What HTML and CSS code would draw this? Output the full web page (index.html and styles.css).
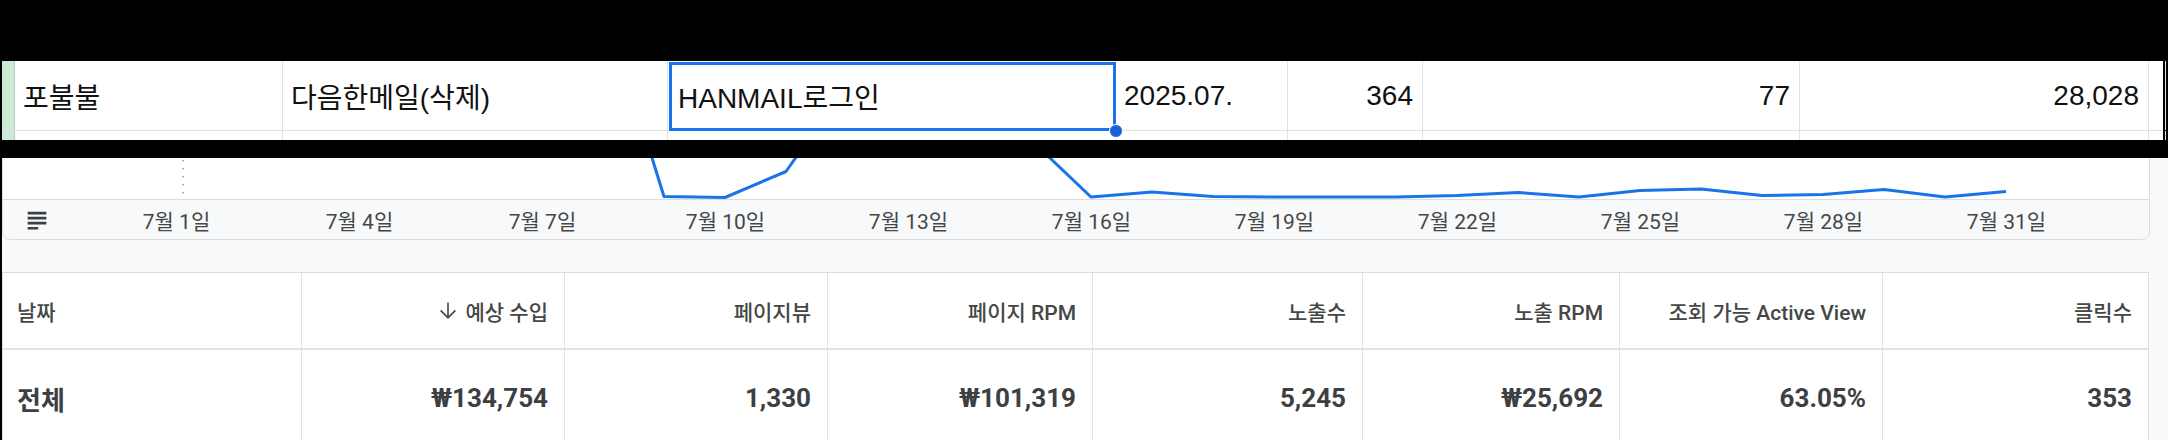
FILE: index.html
```html
<!DOCTYPE html>
<html lang="ko">
<head>
<meta charset="utf-8">
<link rel="stylesheet" href="styles.css">
</head>
<body>
<div class="band-top"></div>
<div class="sheet">
  <div class="sheet-row main">
    <div class="cell rowhead"></div>
    <div class="cell">포불불</div>
    <div class="cell">다음한메일(삭제)</div>
    <div class="cell selected">HANMAIL로그인<span class="handle"></span></div>
    <div class="cell">2025.07.</div>
    <div class="cell num">364</div>
    <div class="cell num">77</div>
    <div class="cell num">28,028</div>
    <div class="cell"></div>
  </div>
  <div class="sheet-row next">
    <div class="cell rowhead"></div>
    <div class="cell"></div>
    <div class="cell"></div>
    <div class="cell"></div>
    <div class="cell"></div>
    <div class="cell"></div>
    <div class="cell"></div>
    <div class="cell"></div>
    <div class="cell"></div>
  </div>
</div>
<div class="band-gap"></div>
<div class="dash">
  <div class="chart-card">
    <svg class="plot" viewBox="3 158 2146 41" preserveAspectRatio="none">
      <line x1="183" y1="160" x2="183" y2="198" class="marker"/>
      <polyline class="series" points="603,0 664,196.5 725,197.5 786,171.5 847,85 908,60 969,50 1030,139 1091,197 1152,192 1213,196.5 1274,197 1335,197 1396,197 1457,195.5 1518,192.5 1579,197 1640,190.5 1701,189 1762,195.5 1823,194.5 1884,189.5 1945,197 2006,191.5"/>
    </svg>
    <div class="axis">
      <div class="axis-icon">
        <svg viewBox="0 0 24 24" width="28" height="28"><path d="M4 5h16v2.3H4zM4 9.3h16v2.3H4zM4 13.6h16v2.3H4zM4 17.9h9v2.3H4z"/></svg>
      </div>
      <span class="tick">7월 1일</span>
      <span class="tick">7월 4일</span>
      <span class="tick">7월 7일</span>
      <span class="tick">7월 10일</span>
      <span class="tick">7월 13일</span>
      <span class="tick">7월 16일</span>
      <span class="tick">7월 19일</span>
      <span class="tick">7월 22일</span>
      <span class="tick">7월 25일</span>
      <span class="tick">7월 28일</span>
      <span class="tick">7월 31일</span>
    </div>
  </div>
  <div class="table-card">
    <div class="trow thead">
      <div class="tc first">날짜</div>
      <div class="tc"><svg class="sort" viewBox="0 0 24 24" width="24" height="24"><path d="M20 12l-1.2-1.2-6 6V3.5h-1.6v13.3l-6-6L4 12l8 8z"/></svg>예상 수입</div>
      <div class="tc">페이지뷰</div>
      <div class="tc">페이지 RPM</div>
      <div class="tc">노출수</div>
      <div class="tc">노출 RPM</div>
      <div class="tc">조회 가능 Active View</div>
      <div class="tc">클릭수</div>
    </div>
    <div class="trow tbody">
      <div class="tc first">전체</div>
      <div class="tc">₩134,754</div>
      <div class="tc">1,330</div>
      <div class="tc">₩101,319</div>
      <div class="tc">5,245</div>
      <div class="tc">₩25,692</div>
      <div class="tc">63.05%</div>
      <div class="tc">353</div>
    </div>
  </div>
</div>
</body>
</html>
```
FILE: styles.css
```css
* { box-sizing: border-box; }
html, body { margin: 0; padding: 0; }
body {
  background: #000;
  width: 2168px;
  height: 440px;
  overflow: hidden;
}

.band-top { height: 61px; }
.band-gap { height: 18px; }

/* ---------- spreadsheet strip ---------- */
.sheet {
  margin-left: 2px;
  width: 2161px;
  background: #fff;
  font-family: "Liberation Sans", "Noto Sans CJK KR", sans-serif;
  font-size: 28px;
  color: #111;
}
.sheet-row {
  display: grid;
  grid-template-columns: 13px 268px 385px 448px 172px 135px 377px 349px 14px;
}
.sheet-row.main { height: 70px; border-bottom: 1px solid #e1e1e1; }
.sheet-row.next { height: 9px; }
.cell {
  border-right: 1px solid #e1e1e1;
  display: flex;
  align-items: center;
  padding: 0 8px;
  white-space: nowrap;
  position: relative;
}
.cell.num { justify-content: flex-end; padding-right: 9px; }
.cell.rowhead { background: #cdebd4; border-right: 1px solid #b9c9bd; padding: 0; }
.sheet-row.main .cell:nth-child(4) { padding-left: 10px; }
.cell.selected::after {
  content: "";
  position: absolute;
  top: 1px;
  left: 1px;
  right: -1px;
  bottom: -1px;
  border: 3px solid #1a73e8;
  pointer-events: none;
}
.handle {
  position: absolute;
  right: -8px;
  bottom: -8px;
  width: 14px;
  height: 14px;
  border-radius: 50%;
  background: #1a62d8;
  border: 1px solid #fff;
  z-index: 2;
}

/* ---------- dashboard ---------- */
.dash {
  margin-left: 2px;
  width: 2166px;
  height: 282px;
  background: #f8f9fa;
  font-family: Roboto, "Noto Sans CJK KR", sans-serif;
  color: #3c4043;
}
.chart-card {
  width: 2148px;
  background: #fff;
  border: 1px solid #dadce0;
  border-top: 0;
  border-radius: 0 0 8px 8px;
  overflow: hidden;
}
.plot {
  display: block;
  width: 2146px;
  height: 41px;
}
.plot .series {
  fill: none;
  stroke: #1a73e8;
  stroke-width: 3;
  stroke-linejoin: round;
}
.plot .marker {
  stroke: #9aa0a6;
  stroke-width: 1.6;
  stroke-dasharray: 1.6 6.4;
}
.axis {
  display: grid;
  grid-template-columns: 82px repeat(11, 183px);
  align-items: center;
  height: 40px;
  border-top: 1px solid #dadce0;
  background: #f8f9fa;
}
.axis-icon {
  display: flex;
  align-items: center;
  padding-left: 20px;
}
.axis-icon svg { fill: #3c4043; }
.tick {
  text-align: center;
  font-size: 21px;
  color: #444746;
  white-space: nowrap;
}

.table-card {
  margin-top: 32px;
  width: 2147px;
  background: #fff;
  border: 1px solid #dadce0;
  border-bottom: 0;
}
.trow {
  display: grid;
  grid-template-columns: 299px 263px 263px 265px 270px 257px 263px 265px;
}
.thead {
  height: 77px;
  border-bottom: 2px solid #e3e3e3;
  font-size: 21px;
  font-weight: 500;
  color: #444746;
}
.tbody {
  height: 96px;
  font-size: 26px;
  font-weight: 700;
  color: #3c4043;
}
.tc {
  display: flex;
  align-items: center;
  justify-content: flex-end;
  padding: 0 16px;
  border-right: 1px solid #e3e3e3;
  white-space: nowrap;
}
.tc:last-child { border-right: 0; }
.tc.first { justify-content: flex-start; padding-left: 14px; }
.sort { fill: #444746; margin-right: 6px; }
```
